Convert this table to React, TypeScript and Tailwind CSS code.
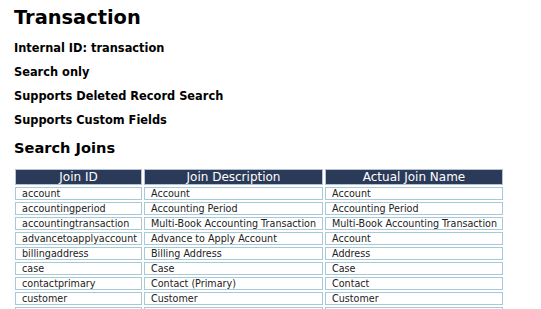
const joins = [
  ["account", "Account", "Account"],
  ["accountingperiod", "Accounting Period", "Accounting Period"],
  ["accountingtransaction", "Multi-Book Accounting Transaction", "Multi-Book Accounting Transaction"],
  ["advancetoapplyaccount", "Advance to Apply Account", "Account"],
  ["billingaddress", "Billing Address", "Address"],
  ["case", "Case", "Case"],
  ["contactprimary", "Contact (Primary)", "Contact"],
  ["customer", "Customer", "Customer"],
  ["customermain", "Customer (Main)", "Customer"],
  ["employee", "Employee", "Employee"],
];

export default function App() {
  return (
    <div className="min-h-screen bg-white pl-[14px] pt-[6px] text-black font-['DejaVu_Sans',Verdana,sans-serif]">
      <h1 className="text-[19.4px] font-bold leading-[24px]">Transaction</h1>
      <div className="mt-[12px] space-y-[11px] text-[11.4px] font-bold leading-[13px]">
        <p>Internal ID: transaction</p>
        <p>Search only</p>
        <p>Supports Deleted Record Search</p>
        <p>Supports Custom Fields</p>
      </div>
      <h2 className="mt-[12px] text-[14.6px] font-bold leading-[18px]">Search Joins</h2>
      <table className="mt-[10px] -ml-[1px] w-[490px] table-fixed border-separate border-spacing-[2px]">
        <colgroup>
          <col className="w-[127px]" />
          <col className="w-[179px]" />
          <col className="w-[178px]" />
        </colgroup>
        <thead>
          <tr>
            {["Join ID", "Join Description", "Actual Join Name"].map((h) => (
              <th key={h} className="h-[16px] border border-[#b4c4d4] bg-[#2a3a58] p-0 text-[12px] font-normal leading-[14px] text-white">
                {h}
              </th>
            ))}
          </tr>
        </thead>
        <tbody>
          {joins.map((row) => (
            <tr key={row[0]}>
              {row.map((cell, i) => (
                <td key={i} className="h-[13px] overflow-hidden border border-[#a8cad8] px-[6px] py-0 text-[9.6px] leading-[11px] whitespace-nowrap text-[#222]">
                  {cell}
                </td>
              ))}
            </tr>
          ))}
        </tbody>
      </table>
    </div>
  );
}
